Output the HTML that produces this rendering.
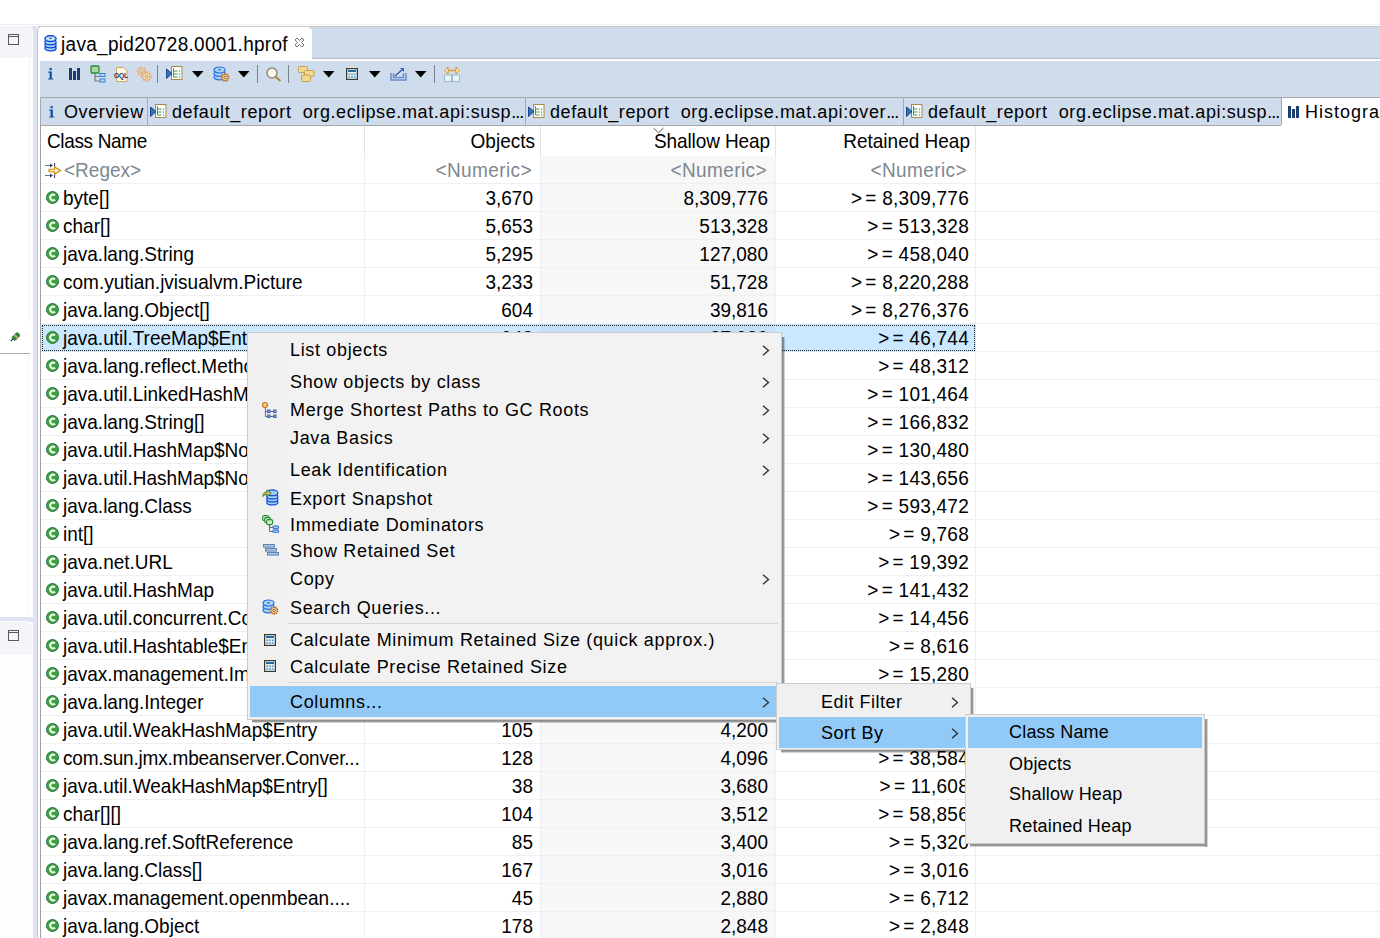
<!DOCTYPE html><html><head><meta charset="utf-8"><style>html,body{margin:0;padding:0;background:#fff;}body{width:1380px;height:938px;overflow:hidden;position:relative;font-family:"Liberation Sans",sans-serif;}</style></head><body>
<div style="position:absolute;left:0px;top:24px;width:1380px;height:1px;background:#f0f0f0"></div>
<div style="position:absolute;left:0px;top:26px;width:33px;height:33px;background:#dfe4f5"></div>
<div style="position:absolute;left:0px;top:26px;width:32px;height:32px;background:#f3f5fb;border-top-right-radius:6px;box-shadow:0 0 0 1px #fff"></div>
<svg style="position:absolute;left:8px;top:34px" width="11" height="11" viewBox="0 0 11 11"><rect x="0.5" y="0.5" width="10" height="10" fill="none" stroke="#595959" stroke-width="1"/><rect x="1" y="2" width="9" height="1" fill="#595959"/></svg>
<div style="position:absolute;left:0px;top:617px;width:37px;height:5px;background:#dfe4f5"></div>
<div style="position:absolute;left:0px;top:59px;width:32px;height:558px;background:#fff;border-bottom-right-radius:5px"></div>
<div style="position:absolute;left:29px;top:59px;width:1px;height:265px;background:#edf4fd"></div>
<svg style="position:absolute;left:10px;top:332px" width="10" height="10" viewBox="0 0 10 10"><path d="M0.8 9.2 L3.6 6.4" stroke="#0a2a90" stroke-width="1.2"/><g transform="rotate(-45 6 4.5)"><rect x="2" y="2.3" width="8" height="4.4" rx="1.2" fill="#3c9c3c" stroke="#1a6a2a" stroke-width="0.7"/><rect x="5.2" y="2.3" width="1.6" height="4.4" fill="#e0a878"/><rect x="3.2" y="2.3" width="0.8" height="4.4" fill="#1f6f2f"/><rect x="8" y="2.3" width="0.8" height="4.4" fill="#1f6f2f"/></g></svg>
<div style="position:absolute;left:0px;top:353px;width:30px;height:1px;background:#a8a8a8"></div>
<div style="position:absolute;left:28px;top:354px;width:1px;height:262px;background:#eef5fd"></div>
<div style="position:absolute;left:0px;top:622px;width:32px;height:33px;background:#f3f5fb;border-top-right-radius:6px;box-shadow:0 0 0 1px #fff"></div>
<svg style="position:absolute;left:8px;top:630px" width="11" height="11" viewBox="0 0 11 11"><rect x="0.5" y="0.5" width="10" height="10" fill="none" stroke="#595959" stroke-width="1"/><rect x="1" y="2" width="9" height="1" fill="#595959"/></svg>
<div style="position:absolute;left:0px;top:655px;width:32px;height:283px;background:#fdfdfe"></div>
<div style="position:absolute;left:33px;top:26px;width:4px;height:912px;background:#dfe4f5"></div>
<div style="position:absolute;left:37px;top:29px;width:1px;height:909px;background:#c8c8c8"></div>
<div style="position:absolute;left:38px;top:26px;width:1342px;height:33px;background:#cfdcec"></div>
<div style="position:absolute;left:38px;top:26px;width:1342px;height:1px;background:#c8c8c8"></div>
<div style="position:absolute;left:37px;top:26px;width:275px;height:33px;background:#fff;border-top:1px solid #c8c8c8;border-left:1px solid #c8c8c8;border-top-left-radius:5px;border-top-right-radius:5px;box-sizing:border-box"></div>
<svg style="position:absolute;left:44px;top:35px" width="13" height="17" viewBox="0 0 13 17"><g stroke="#1040d8" stroke-width="1.3" fill="#a6d6f2"><ellipse cx="6.5" cy="13.3" rx="5.6" ry="2.6"/><ellipse cx="6.5" cy="10.3" rx="5.6" ry="2.6"/><ellipse cx="6.5" cy="7.3" rx="5.6" ry="2.6"/><ellipse cx="6.5" cy="3.6" rx="5.6" ry="3"/></g><ellipse cx="6.5" cy="3.6" rx="3.5" ry="1.2" fill="#d8f0fb"/><rect x="5.6" y="2.8" width="1.8" height="1.2" fill="#0a2a60"/></svg>
<div style="position:absolute;left:61px;top:34px;height:21px;line-height:21px;font-size:19px;color:#000;white-space:nowrap;transform:scaleY(1.03);transform-origin:0 17px;letter-spacing:0.3px">java_pid20728.0001.hprof</div>
<svg style="position:absolute;left:294px;top:37px" width="11" height="11" viewBox="0 0 11 11"><path d="M1 3 L3 1 L5.5 3.5 L8 1 L10 3 L7.5 5.5 L10 8 L8 10 L5.5 7.5 L3 10 L1 8 L3.5 5.5 Z" fill="#fff" stroke="#707070" stroke-width="1"/></svg>
<div style="position:absolute;left:38px;top:59px;width:1342px;height:2px;background:#fff"></div>
<div style="position:absolute;left:312px;top:58px;width:1068px;height:1px;background:#b4bcc8"></div>
<div style="position:absolute;left:40px;top:61px;width:1340px;height:36px;background:#cfdcec"></div>
<svg style="position:absolute;left:48px;top:68px" width="6" height="12" viewBox="0 0 6 12"><rect x="1.6" y="0" width="2.2" height="2.2" fill="#0b4fa0"/><path d="M0.2 3.6 H3.8 V10.4 H5.2 V11.6 H0.2 V10.4 H1.6 V4.8 H0.2 Z" fill="#0b4fa0"/></svg>
<svg style="position:absolute;left:69px;top:68px" width="12" height="12" viewBox="0 0 12 12"><rect x="0" y="0" width="3" height="12" fill="#1b3e6e"/><rect x="4" y="3" width="3" height="9" fill="#1b3e6e"/><rect x="8" y="0" width="3" height="12" fill="#1b3e6e"/></svg>
<svg style="position:absolute;left:90px;top:65px" width="16" height="18" viewBox="0 0 16 18"><path d="M5 8 V16 H10 M5 11.5 H10" stroke="#7a7a7a" stroke-width="1.2" fill="none"/><rect x="1" y="1" width="8" height="7" rx="1" fill="#a8d8a0" stroke="#2a8a3a" stroke-width="1.3"/><rect x="10" y="8.5" width="5" height="3" fill="#a8dcf8" stroke="#3a80d0" stroke-width="1"/><rect x="10" y="14" width="5" height="3" fill="#a8dcf8" stroke="#3a80d0" stroke-width="1"/></svg>
<svg style="position:absolute;left:114px;top:67px" width="14" height="15" viewBox="0 0 14 15"><path d="M2.5 0.5 H9.5 L13 4 V14.5 H2.5 Z" fill="#fbf7ec" stroke="#c8a860" stroke-width="1"/><text x="0" y="10.5" font-family="Liberation Sans" font-size="6.5" font-weight="bold" fill="#1a2a6a">OQL</text></svg>
<svg style="position:absolute;left:136px;top:66px" width="17" height="17" viewBox="0 0 17 17"><circle cx="5.5" cy="5.5" r="3.8000000000000003" fill="none" stroke="#eba588" stroke-width="2.2" stroke-dasharray="1.5 1.3"/><circle cx="5.5" cy="5.5" r="3.2" fill="#f8e6a0" stroke="#e0a070" stroke-width="0.7"/><circle cx="5.5" cy="5.5" r="1.4" fill="#fff" stroke="#806a50" stroke-width="0.7"/><circle cx="10.5" cy="10.5" r="4.2" fill="none" stroke="#eba588" stroke-width="2.2" stroke-dasharray="1.5 1.3"/><circle cx="10.5" cy="10.5" r="3.6" fill="#f8e6a0" stroke="#e0a070" stroke-width="0.7"/><circle cx="10.5" cy="10.5" r="1.4" fill="#fff" stroke="#806a50" stroke-width="0.7"/></svg>
<div style="position:absolute;left:157px;top:65px;width:1px;height:18px;background:#7a8290"></div>
<svg style="position:absolute;left:166px;top:66px" width="17" height="14" viewBox="0 0 17 14"><rect x="5.5" y="0.5" width="10.5" height="13" fill="#fff" stroke="#a88a48" stroke-width="1"/><path d="M7.5 2 V11 M7.5 5 H11.5 M7.5 8 H11.5 M7.5 11 H11.5" stroke="#3a9a4a" stroke-width="1" fill="none"/><rect x="13" y="4.5" width="1.2" height="1.2" fill="#3a9a4a"/><rect x="13" y="7.5" width="1.2" height="1.2" fill="#3a9a4a"/><rect x="13" y="10.5" width="1.2" height="1.2" fill="#3a9a4a"/><path d="M0.5 3 L6 7.5 L0.5 12.5 Z" fill="#2a7ab0" stroke="#0a2a80" stroke-width="0.8"/></svg>
<svg style="position:absolute;left:192px;top:71px" width="12" height="7" viewBox="0 0 12 7"><path d="M0 0 H11.5 L5.75 6.6 Z" fill="#000"/></svg>
<svg style="position:absolute;left:213px;top:66px" width="17" height="16" viewBox="0 0 17 16"><g stroke="#2a70e0" stroke-width="1.2" fill="#a8d8f5"><ellipse cx="6.5" cy="11" rx="5.5" ry="2.8"/><ellipse cx="6.5" cy="7.5" rx="5.5" ry="2.8"/><ellipse cx="6.5" cy="4" rx="5.5" ry="3"/></g><rect x="5.5" y="3.2" width="2" height="1.2" fill="#0a3a80"/><circle cx="12" cy="11.5" r="3.7" fill="none" stroke="#c86a30" stroke-width="1.5" stroke-dasharray="1.2 1.1"/><circle cx="12" cy="11.5" r="3.1" fill="#f8d880" stroke="#c86a30" stroke-width="0.9"/><circle cx="12" cy="11.5" r="1.2" fill="#fff" stroke="#6a4a30" stroke-width="0.8"/></svg>
<svg style="position:absolute;left:238px;top:71px" width="12" height="7" viewBox="0 0 12 7"><path d="M0 0 H11.5 L5.75 6.6 Z" fill="#000"/></svg>
<div style="position:absolute;left:257px;top:65px;width:1px;height:18px;background:#7a8290"></div>
<svg style="position:absolute;left:266px;top:67px" width="16" height="15" viewBox="0 0 16 15"><circle cx="6" cy="6" r="5" fill="#fbf8e8" stroke="#8a8a80" stroke-width="1.5"/><path d="M9.5 9.5 L14.5 14" stroke="#b08a40" stroke-width="2.2"/></svg>
<div style="position:absolute;left:288px;top:65px;width:1px;height:18px;background:#7a8290"></div>
<svg style="position:absolute;left:298px;top:66px" width="17" height="16" viewBox="0 0 17 16"><g fill="#f5d990" stroke="#c8a050" stroke-width="1"><rect x="0.5" y="0.5" width="9" height="6" rx="1"/><rect x="6.5" y="4.5" width="9.5" height="6" rx="1"/><rect x="3.5" y="9" width="9" height="6.5" rx="1"/></g></svg>
<svg style="position:absolute;left:323px;top:71px" width="12" height="7" viewBox="0 0 12 7"><path d="M0 0 H11.5 L5.75 6.6 Z" fill="#000"/></svg>
<svg style="position:absolute;left:346px;top:68px" width="12" height="12" viewBox="0 0 12 12"><rect x="0.6" y="0.6" width="10.8" height="10.8" fill="#e8f0f0" stroke="#3a3a30" stroke-width="1.2"/><rect x="2" y="2" width="8" height="2" fill="#2a6aa0"/><g fill="#3a8ac0"><rect x="2.5" y="5.5" width="1.6" height="1.4"/><rect x="5.2" y="5.5" width="1.6" height="1.4"/><rect x="7.9" y="5.5" width="1.6" height="1.4"/><rect x="2.5" y="8.3" width="1.6" height="1.4"/><rect x="5.2" y="8.3" width="1.6" height="1.4"/><rect x="7.9" y="8.3" width="1.6" height="1.4"/></g></svg>
<svg style="position:absolute;left:369px;top:71px" width="12" height="7" viewBox="0 0 12 7"><path d="M0 0 H11.5 L5.75 6.6 Z" fill="#000"/></svg>
<svg style="position:absolute;left:390px;top:67px" width="17" height="14" viewBox="0 0 17 14"><path d="M1 6 V13 H16 V6 M3.5 6 V10.5 H13.5 V6" fill="none" stroke="#6a8ac8" stroke-width="1.5"/><path d="M5 9 L13 2" stroke="#3a50a0" stroke-width="1.3"/><path d="M10 1 H14 V5 Z" fill="#2a6ad0"/></svg>
<svg style="position:absolute;left:415px;top:71px" width="12" height="7" viewBox="0 0 12 7"><path d="M0 0 H11.5 L5.75 6.6 Z" fill="#000"/></svg>
<div style="position:absolute;left:434px;top:65px;width:1px;height:18px;background:#7a8290"></div>
<svg style="position:absolute;left:444px;top:66px" width="16" height="16" viewBox="0 0 16 16"><path d="M3 4.5 H13" stroke="#e0a030" stroke-width="1.5"/><path d="M0.5 4.5 L4 1 V8 Z M15.5 4.5 L12 1 V8 Z" fill="#fff6d0" stroke="#d89020" stroke-width="1"/><rect x="0.5" y="9" width="7" height="6.5" fill="#e8f4fc" stroke="#a0b8c8" stroke-width="1"/><rect x="8.5" y="9" width="7" height="6.5" fill="#e8f4fc" stroke="#a0b8c8" stroke-width="1"/></svg>
<div style="position:absolute;left:40px;top:97px;width:1340px;height:29px;background:#cfdcec"></div>
<div style="position:absolute;left:40px;top:97px;width:1340px;height:1px;background:#a8a8a8"></div>
<div style="position:absolute;left:40px;top:125px;width:1242px;height:1px;background:#a8a8a8"></div>
<div style="position:absolute;left:40px;top:97px;width:1px;height:29px;background:#a8a8a8"></div>
<div style="position:absolute;left:147px;top:98px;width:1px;height:27px;background:#a8a8a8"></div>
<div style="position:absolute;left:525px;top:98px;width:1px;height:27px;background:#a8a8a8"></div>
<div style="position:absolute;left:903px;top:98px;width:1px;height:27px;background:#a8a8a8"></div>
<div style="position:absolute;left:1281px;top:97px;width:99px;height:29px;background:#fff"></div>
<div style="position:absolute;left:1281px;top:97px;width:1px;height:28px;background:#a8a8a8"></div>
<div style="position:absolute;left:1281px;top:97px;width:99px;height:1px;background:#a8a8a8"></div>
<svg style="position:absolute;left:49px;top:106px" width="6" height="12" viewBox="0 0 6 12"><rect x="1.6" y="0" width="2.2" height="2.2" fill="#0b4fa0"/><path d="M0.2 3.6 H3.8 V10.4 H5.2 V11.6 H0.2 V10.4 H1.6 V4.8 H0.2 Z" fill="#0b4fa0"/></svg>
<div style="position:absolute;left:64px;top:102px;height:20px;line-height:20px;font-size:18px;color:#000;white-space:nowrap;letter-spacing:0.6px">Overview</div>
<svg style="position:absolute;left:150px;top:104px" width="17" height="14" viewBox="0 0 17 14"><rect x="5.5" y="0.5" width="10.5" height="13" fill="#fff" stroke="#a88a48" stroke-width="1"/><path d="M7.5 2 V11 M7.5 5 H11.5 M7.5 8 H11.5 M7.5 11 H11.5" stroke="#3a9a4a" stroke-width="1" fill="none"/><rect x="13" y="4.5" width="1.2" height="1.2" fill="#3a9a4a"/><rect x="13" y="7.5" width="1.2" height="1.2" fill="#3a9a4a"/><rect x="13" y="10.5" width="1.2" height="1.2" fill="#3a9a4a"/><path d="M0.5 3 L6 7.5 L0.5 12.5 Z" fill="#2a7ab0" stroke="#0a2a80" stroke-width="0.8"/></svg>
<div style="position:absolute;left:172px;top:102px;height:20px;line-height:20px;font-size:18px;color:#000;white-space:nowrap;letter-spacing:0.6px">default_report&nbsp; org.eclipse.mat.api:susp<span style="letter-spacing:-1px">...</span></div>
<svg style="position:absolute;left:528px;top:104px" width="17" height="14" viewBox="0 0 17 14"><rect x="5.5" y="0.5" width="10.5" height="13" fill="#fff" stroke="#a88a48" stroke-width="1"/><path d="M7.5 2 V11 M7.5 5 H11.5 M7.5 8 H11.5 M7.5 11 H11.5" stroke="#3a9a4a" stroke-width="1" fill="none"/><rect x="13" y="4.5" width="1.2" height="1.2" fill="#3a9a4a"/><rect x="13" y="7.5" width="1.2" height="1.2" fill="#3a9a4a"/><rect x="13" y="10.5" width="1.2" height="1.2" fill="#3a9a4a"/><path d="M0.5 3 L6 7.5 L0.5 12.5 Z" fill="#2a7ab0" stroke="#0a2a80" stroke-width="0.8"/></svg>
<div style="position:absolute;left:550px;top:102px;height:20px;line-height:20px;font-size:18px;color:#000;white-space:nowrap;letter-spacing:0.6px">default_report&nbsp; org.eclipse.mat.api:over<span style="letter-spacing:-1px">...</span></div>
<svg style="position:absolute;left:906px;top:104px" width="17" height="14" viewBox="0 0 17 14"><rect x="5.5" y="0.5" width="10.5" height="13" fill="#fff" stroke="#a88a48" stroke-width="1"/><path d="M7.5 2 V11 M7.5 5 H11.5 M7.5 8 H11.5 M7.5 11 H11.5" stroke="#3a9a4a" stroke-width="1" fill="none"/><rect x="13" y="4.5" width="1.2" height="1.2" fill="#3a9a4a"/><rect x="13" y="7.5" width="1.2" height="1.2" fill="#3a9a4a"/><rect x="13" y="10.5" width="1.2" height="1.2" fill="#3a9a4a"/><path d="M0.5 3 L6 7.5 L0.5 12.5 Z" fill="#2a7ab0" stroke="#0a2a80" stroke-width="0.8"/></svg>
<div style="position:absolute;left:928px;top:102px;height:20px;line-height:20px;font-size:18px;color:#000;white-space:nowrap;letter-spacing:0.6px">default_report&nbsp; org.eclipse.mat.api:susp<span style="letter-spacing:-1px">...</span></div>
<svg style="position:absolute;left:1288px;top:106px" width="11" height="12" viewBox="0 0 11 12"><rect x="0" y="0" width="3" height="12" fill="#1b3e6e"/><rect x="4" y="3" width="3" height="9" fill="#1b3e6e"/><rect x="8" y="0" width="3" height="12" fill="#1b3e6e"/></svg>
<div style="position:absolute;left:1305px;top:102px;height:20px;line-height:20px;font-size:18px;color:#000;white-space:nowrap;letter-spacing:1px">Histogram</div>
<div style="position:absolute;left:40px;top:126px;width:1px;height:812px;background:#a0a0a0"></div>
<div style="position:absolute;left:47px;top:131px;height:21px;line-height:21px;font-size:19px;color:#000;white-space:nowrap;transform:scaleY(1.07);transform-origin:0 17px;letter-spacing:-0.35px">Class Name</div>
<div style="position:absolute;right:845px;top:131px;height:21px;line-height:21px;font-size:19px;color:#000;white-space:nowrap;text-align:right;transform:scaleY(1.07);transform-origin:0 17px;">Objects</div>
<div style="position:absolute;right:610px;top:131px;height:21px;line-height:21px;font-size:19px;color:#000;white-space:nowrap;text-align:right;transform:scaleY(1.07);transform-origin:0 17px;letter-spacing:-0.1px">Shallow Heap</div>
<div style="position:absolute;right:410px;top:131px;height:21px;line-height:21px;font-size:19px;color:#000;white-space:nowrap;text-align:right;transform:scaleY(1.07);transform-origin:0 17px;">Retained Heap</div>
<div style="position:absolute;left:364px;top:126px;width:1px;height:30px;background:#e5e5e5"></div>
<div style="position:absolute;left:540px;top:126px;width:1px;height:30px;background:#e5e5e5"></div>
<div style="position:absolute;left:775px;top:126px;width:1px;height:30px;background:#e5e5e5"></div>
<div style="position:absolute;left:975px;top:126px;width:1px;height:30px;background:#e5e5e5"></div>
<svg style="position:absolute;left:653px;top:127px" width="12" height="7" viewBox="0 0 12 7"><path d="M0.5 1 L5.5 5.8 L10.5 1" fill="none" stroke="#555" stroke-width="1"/></svg>
<div style="position:absolute;left:541px;top:156px;width:234px;height:782px;background:#f7f7f7"></div>
<svg style="position:absolute;left:44px;top:162px" width="18" height="17" viewBox="0 0 18 17"><path d="M1 3.5 H8 M1 13.5 H8" stroke="#5a7c9c" stroke-width="1.1"/><path d="M6 1.6 L9 3.5 L6 5.4 Z M6 11.6 L9 13.5 L6 15.4 Z" fill="#2c3c64"/><rect x="10" y="1" width="1.1" height="5" fill="#3a4a7a"/><rect x="10" y="11" width="1.1" height="5" fill="#3a4a7a"/><path d="M5 7.2 H10.6 V5 L16.6 8.5 L10.6 12 V9.8 H5 Z" fill="#fff2c0" stroke="#cf8610" stroke-width="1.1"/></svg>
<div style="position:absolute;left:64px;top:160px;height:21px;line-height:21px;font-size:19px;color:#7d8792;white-space:nowrap;transform:scaleY(1.07);transform-origin:0 17px;">&lt;Regex&gt;</div>
<div style="position:absolute;right:848px;top:160px;height:21px;line-height:21px;font-size:19px;color:#7d8792;white-space:nowrap;text-align:right;transform:scaleY(1.07);transform-origin:0 17px;letter-spacing:0.4px">&lt;Numeric&gt;</div>
<div style="position:absolute;right:613px;top:160px;height:21px;line-height:21px;font-size:19px;color:#7d8792;white-space:nowrap;text-align:right;transform:scaleY(1.07);transform-origin:0 17px;letter-spacing:0.4px">&lt;Numeric&gt;</div>
<div style="position:absolute;right:413px;top:160px;height:21px;line-height:21px;font-size:19px;color:#7d8792;white-space:nowrap;text-align:right;transform:scaleY(1.07);transform-origin:0 17px;letter-spacing:0.4px">&lt;Numeric&gt;</div>
<div style="position:absolute;left:41px;top:183px;width:1339px;height:1px;background:#f0f0f0"></div>
<div style="position:absolute;left:364px;top:156px;width:1px;height:782px;background:#eaf1fb"></div>
<div style="position:absolute;left:540px;top:156px;width:1px;height:782px;background:#eaf1fb"></div>
<div style="position:absolute;left:775px;top:156px;width:1px;height:782px;background:#eaf1fb"></div>
<div style="position:absolute;left:975px;top:156px;width:1px;height:782px;background:#eaf1fb"></div>
<div style="position:absolute;left:41px;top:211px;width:1339px;height:1px;background:#f0f0f0"></div>
<div style="position:absolute;left:41px;top:239px;width:1339px;height:1px;background:#f0f0f0"></div>
<div style="position:absolute;left:41px;top:267px;width:1339px;height:1px;background:#f0f0f0"></div>
<div style="position:absolute;left:41px;top:295px;width:1339px;height:1px;background:#f0f0f0"></div>
<div style="position:absolute;left:41px;top:323px;width:1339px;height:1px;background:#f0f0f0"></div>
<div style="position:absolute;left:41px;top:351px;width:1339px;height:1px;background:#f0f0f0"></div>
<div style="position:absolute;left:41px;top:379px;width:1339px;height:1px;background:#f0f0f0"></div>
<div style="position:absolute;left:41px;top:407px;width:1339px;height:1px;background:#f0f0f0"></div>
<div style="position:absolute;left:41px;top:435px;width:1339px;height:1px;background:#f0f0f0"></div>
<div style="position:absolute;left:41px;top:463px;width:1339px;height:1px;background:#f0f0f0"></div>
<div style="position:absolute;left:41px;top:491px;width:1339px;height:1px;background:#f0f0f0"></div>
<div style="position:absolute;left:41px;top:519px;width:1339px;height:1px;background:#f0f0f0"></div>
<div style="position:absolute;left:41px;top:547px;width:1339px;height:1px;background:#f0f0f0"></div>
<div style="position:absolute;left:41px;top:575px;width:1339px;height:1px;background:#f0f0f0"></div>
<div style="position:absolute;left:41px;top:603px;width:1339px;height:1px;background:#f0f0f0"></div>
<div style="position:absolute;left:41px;top:631px;width:1339px;height:1px;background:#f0f0f0"></div>
<div style="position:absolute;left:41px;top:659px;width:1339px;height:1px;background:#f0f0f0"></div>
<div style="position:absolute;left:41px;top:687px;width:1339px;height:1px;background:#f0f0f0"></div>
<div style="position:absolute;left:41px;top:715px;width:1339px;height:1px;background:#f0f0f0"></div>
<div style="position:absolute;left:41px;top:743px;width:1339px;height:1px;background:#f0f0f0"></div>
<div style="position:absolute;left:41px;top:771px;width:1339px;height:1px;background:#f0f0f0"></div>
<div style="position:absolute;left:41px;top:799px;width:1339px;height:1px;background:#f0f0f0"></div>
<div style="position:absolute;left:41px;top:827px;width:1339px;height:1px;background:#f0f0f0"></div>
<div style="position:absolute;left:41px;top:855px;width:1339px;height:1px;background:#f0f0f0"></div>
<div style="position:absolute;left:41px;top:883px;width:1339px;height:1px;background:#f0f0f0"></div>
<div style="position:absolute;left:41px;top:911px;width:1339px;height:1px;background:#f0f0f0"></div>
<div style="position:absolute;left:41px;top:939px;width:1339px;height:1px;background:#f0f0f0"></div>
<div style="position:absolute;left:41px;top:324px;width:935px;height:28px;background:#cce8ff"></div>
<div style="position:absolute;left:541px;top:324px;width:234px;height:28px;background:#c4e0f8"></div>
<div style="position:absolute;left:42px;top:325px;width:931px;height:24px;border:1px dotted #222;"></div>
<svg style="position:absolute;left:46px;top:191px" width="14" height="14" viewBox="0 0 14 14"><circle cx="6.5" cy="6.5" r="6" fill="#3ca23c" stroke="#237a3a" stroke-width="1"/><path d="M9 4.3 A2.9 2.9 0 1 0 9 8.7" fill="none" stroke="#fff" stroke-width="1.9"/></svg>
<div style="position:absolute;left:63px;top:188px;height:21px;line-height:21px;font-size:19px;color:#000;white-space:nowrap;transform:scaleY(1.07);transform-origin:0 17px;">byte[]</div>
<div style="position:absolute;right:847px;top:188px;height:21px;line-height:21px;font-size:19px;color:#000;white-space:nowrap;text-align:right;transform:scaleY(1.07);transform-origin:0 17px;">3,670</div>
<div style="position:absolute;right:612px;top:188px;height:21px;line-height:21px;font-size:19px;color:#000;white-space:nowrap;text-align:right;transform:scaleY(1.07);transform-origin:0 17px;">8,309,776</div>
<div style="position:absolute;right:411px;top:188px;height:21px;line-height:21px;font-size:19px;color:#000;white-space:nowrap;text-align:right;transform:scaleY(1.07);transform-origin:0 17px;letter-spacing:0.25px">&gt;<span style="margin-left:3px">=</span>&nbsp;8,309,776</div>
<svg style="position:absolute;left:46px;top:219px" width="14" height="14" viewBox="0 0 14 14"><circle cx="6.5" cy="6.5" r="6" fill="#3ca23c" stroke="#237a3a" stroke-width="1"/><path d="M9 4.3 A2.9 2.9 0 1 0 9 8.7" fill="none" stroke="#fff" stroke-width="1.9"/></svg>
<div style="position:absolute;left:63px;top:216px;height:21px;line-height:21px;font-size:19px;color:#000;white-space:nowrap;transform:scaleY(1.07);transform-origin:0 17px;">char[]</div>
<div style="position:absolute;right:847px;top:216px;height:21px;line-height:21px;font-size:19px;color:#000;white-space:nowrap;text-align:right;transform:scaleY(1.07);transform-origin:0 17px;">5,653</div>
<div style="position:absolute;right:612px;top:216px;height:21px;line-height:21px;font-size:19px;color:#000;white-space:nowrap;text-align:right;transform:scaleY(1.07);transform-origin:0 17px;">513,328</div>
<div style="position:absolute;right:411px;top:216px;height:21px;line-height:21px;font-size:19px;color:#000;white-space:nowrap;text-align:right;transform:scaleY(1.07);transform-origin:0 17px;letter-spacing:0.25px">&gt;<span style="margin-left:3px">=</span>&nbsp;513,328</div>
<svg style="position:absolute;left:46px;top:247px" width="14" height="14" viewBox="0 0 14 14"><circle cx="6.5" cy="6.5" r="6" fill="#3ca23c" stroke="#237a3a" stroke-width="1"/><path d="M9 4.3 A2.9 2.9 0 1 0 9 8.7" fill="none" stroke="#fff" stroke-width="1.9"/></svg>
<div style="position:absolute;left:63px;top:244px;height:21px;line-height:21px;font-size:19px;color:#000;white-space:nowrap;transform:scaleY(1.07);transform-origin:0 17px;">java.lang.String</div>
<div style="position:absolute;right:847px;top:244px;height:21px;line-height:21px;font-size:19px;color:#000;white-space:nowrap;text-align:right;transform:scaleY(1.07);transform-origin:0 17px;">5,295</div>
<div style="position:absolute;right:612px;top:244px;height:21px;line-height:21px;font-size:19px;color:#000;white-space:nowrap;text-align:right;transform:scaleY(1.07);transform-origin:0 17px;">127,080</div>
<div style="position:absolute;right:411px;top:244px;height:21px;line-height:21px;font-size:19px;color:#000;white-space:nowrap;text-align:right;transform:scaleY(1.07);transform-origin:0 17px;letter-spacing:0.25px">&gt;<span style="margin-left:3px">=</span>&nbsp;458,040</div>
<svg style="position:absolute;left:46px;top:275px" width="14" height="14" viewBox="0 0 14 14"><circle cx="6.5" cy="6.5" r="6" fill="#3ca23c" stroke="#237a3a" stroke-width="1"/><path d="M9 4.3 A2.9 2.9 0 1 0 9 8.7" fill="none" stroke="#fff" stroke-width="1.9"/></svg>
<div style="position:absolute;left:63px;top:272px;height:21px;line-height:21px;font-size:19px;color:#000;white-space:nowrap;transform:scaleY(1.07);transform-origin:0 17px;">com.yutian.jvisualvm.Picture</div>
<div style="position:absolute;right:847px;top:272px;height:21px;line-height:21px;font-size:19px;color:#000;white-space:nowrap;text-align:right;transform:scaleY(1.07);transform-origin:0 17px;">3,233</div>
<div style="position:absolute;right:612px;top:272px;height:21px;line-height:21px;font-size:19px;color:#000;white-space:nowrap;text-align:right;transform:scaleY(1.07);transform-origin:0 17px;">51,728</div>
<div style="position:absolute;right:411px;top:272px;height:21px;line-height:21px;font-size:19px;color:#000;white-space:nowrap;text-align:right;transform:scaleY(1.07);transform-origin:0 17px;letter-spacing:0.25px">&gt;<span style="margin-left:3px">=</span>&nbsp;8,220,288</div>
<svg style="position:absolute;left:46px;top:303px" width="14" height="14" viewBox="0 0 14 14"><circle cx="6.5" cy="6.5" r="6" fill="#3ca23c" stroke="#237a3a" stroke-width="1"/><path d="M9 4.3 A2.9 2.9 0 1 0 9 8.7" fill="none" stroke="#fff" stroke-width="1.9"/></svg>
<div style="position:absolute;left:63px;top:300px;height:21px;line-height:21px;font-size:19px;color:#000;white-space:nowrap;transform:scaleY(1.07);transform-origin:0 17px;">java.lang.Object[]</div>
<div style="position:absolute;right:847px;top:300px;height:21px;line-height:21px;font-size:19px;color:#000;white-space:nowrap;text-align:right;transform:scaleY(1.07);transform-origin:0 17px;">604</div>
<div style="position:absolute;right:612px;top:300px;height:21px;line-height:21px;font-size:19px;color:#000;white-space:nowrap;text-align:right;transform:scaleY(1.07);transform-origin:0 17px;">39,816</div>
<div style="position:absolute;right:411px;top:300px;height:21px;line-height:21px;font-size:19px;color:#000;white-space:nowrap;text-align:right;transform:scaleY(1.07);transform-origin:0 17px;letter-spacing:0.25px">&gt;<span style="margin-left:3px">=</span>&nbsp;8,276,376</div>
<svg style="position:absolute;left:46px;top:331px" width="14" height="14" viewBox="0 0 14 14"><circle cx="6.5" cy="6.5" r="6" fill="#3ca23c" stroke="#237a3a" stroke-width="1"/><path d="M9 4.3 A2.9 2.9 0 1 0 9 8.7" fill="none" stroke="#fff" stroke-width="1.9"/></svg>
<div style="position:absolute;left:63px;top:328px;height:21px;line-height:21px;font-size:19px;color:#000;white-space:nowrap;transform:scaleY(1.07);transform-origin:0 17px;">java.util.TreeMap$Entry</div>
<div style="position:absolute;right:847px;top:328px;height:21px;line-height:21px;font-size:19px;color:#000;white-space:nowrap;text-align:right;transform:scaleY(1.07);transform-origin:0 17px;">948</div>
<div style="position:absolute;right:612px;top:328px;height:21px;line-height:21px;font-size:19px;color:#000;white-space:nowrap;text-align:right;transform:scaleY(1.07);transform-origin:0 17px;">37,920</div>
<div style="position:absolute;right:411px;top:328px;height:21px;line-height:21px;font-size:19px;color:#000;white-space:nowrap;text-align:right;transform:scaleY(1.07);transform-origin:0 17px;letter-spacing:0.25px">&gt;<span style="margin-left:3px">=</span>&nbsp;46,744</div>
<svg style="position:absolute;left:46px;top:359px" width="14" height="14" viewBox="0 0 14 14"><circle cx="6.5" cy="6.5" r="6" fill="#3ca23c" stroke="#237a3a" stroke-width="1"/><path d="M9 4.3 A2.9 2.9 0 1 0 9 8.7" fill="none" stroke="#fff" stroke-width="1.9"/></svg>
<div style="position:absolute;left:63px;top:356px;height:21px;line-height:21px;font-size:19px;color:#000;white-space:nowrap;transform:scaleY(1.07);transform-origin:0 17px;">java.lang.reflect.Method</div>
<div style="position:absolute;right:411px;top:356px;height:21px;line-height:21px;font-size:19px;color:#000;white-space:nowrap;text-align:right;transform:scaleY(1.07);transform-origin:0 17px;letter-spacing:0.25px">&gt;<span style="margin-left:3px">=</span>&nbsp;48,312</div>
<svg style="position:absolute;left:46px;top:387px" width="14" height="14" viewBox="0 0 14 14"><circle cx="6.5" cy="6.5" r="6" fill="#3ca23c" stroke="#237a3a" stroke-width="1"/><path d="M9 4.3 A2.9 2.9 0 1 0 9 8.7" fill="none" stroke="#fff" stroke-width="1.9"/></svg>
<div style="position:absolute;left:63px;top:384px;height:21px;line-height:21px;font-size:19px;color:#000;white-space:nowrap;transform:scaleY(1.07);transform-origin:0 17px;">java.util.LinkedHashMap$Entry</div>
<div style="position:absolute;right:411px;top:384px;height:21px;line-height:21px;font-size:19px;color:#000;white-space:nowrap;text-align:right;transform:scaleY(1.07);transform-origin:0 17px;letter-spacing:0.25px">&gt;<span style="margin-left:3px">=</span>&nbsp;101,464</div>
<svg style="position:absolute;left:46px;top:415px" width="14" height="14" viewBox="0 0 14 14"><circle cx="6.5" cy="6.5" r="6" fill="#3ca23c" stroke="#237a3a" stroke-width="1"/><path d="M9 4.3 A2.9 2.9 0 1 0 9 8.7" fill="none" stroke="#fff" stroke-width="1.9"/></svg>
<div style="position:absolute;left:63px;top:412px;height:21px;line-height:21px;font-size:19px;color:#000;white-space:nowrap;transform:scaleY(1.07);transform-origin:0 17px;">java.lang.String[]</div>
<div style="position:absolute;right:411px;top:412px;height:21px;line-height:21px;font-size:19px;color:#000;white-space:nowrap;text-align:right;transform:scaleY(1.07);transform-origin:0 17px;letter-spacing:0.25px">&gt;<span style="margin-left:3px">=</span>&nbsp;166,832</div>
<svg style="position:absolute;left:46px;top:443px" width="14" height="14" viewBox="0 0 14 14"><circle cx="6.5" cy="6.5" r="6" fill="#3ca23c" stroke="#237a3a" stroke-width="1"/><path d="M9 4.3 A2.9 2.9 0 1 0 9 8.7" fill="none" stroke="#fff" stroke-width="1.9"/></svg>
<div style="position:absolute;left:63px;top:440px;height:21px;line-height:21px;font-size:19px;color:#000;white-space:nowrap;transform:scaleY(1.07);transform-origin:0 17px;">java.util.HashMap$Node</div>
<div style="position:absolute;right:411px;top:440px;height:21px;line-height:21px;font-size:19px;color:#000;white-space:nowrap;text-align:right;transform:scaleY(1.07);transform-origin:0 17px;letter-spacing:0.25px">&gt;<span style="margin-left:3px">=</span>&nbsp;130,480</div>
<svg style="position:absolute;left:46px;top:471px" width="14" height="14" viewBox="0 0 14 14"><circle cx="6.5" cy="6.5" r="6" fill="#3ca23c" stroke="#237a3a" stroke-width="1"/><path d="M9 4.3 A2.9 2.9 0 1 0 9 8.7" fill="none" stroke="#fff" stroke-width="1.9"/></svg>
<div style="position:absolute;left:63px;top:468px;height:21px;line-height:21px;font-size:19px;color:#000;white-space:nowrap;transform:scaleY(1.07);transform-origin:0 17px;">java.util.HashMap$Node[]</div>
<div style="position:absolute;right:411px;top:468px;height:21px;line-height:21px;font-size:19px;color:#000;white-space:nowrap;text-align:right;transform:scaleY(1.07);transform-origin:0 17px;letter-spacing:0.25px">&gt;<span style="margin-left:3px">=</span>&nbsp;143,656</div>
<svg style="position:absolute;left:46px;top:499px" width="14" height="14" viewBox="0 0 14 14"><circle cx="6.5" cy="6.5" r="6" fill="#3ca23c" stroke="#237a3a" stroke-width="1"/><path d="M9 4.3 A2.9 2.9 0 1 0 9 8.7" fill="none" stroke="#fff" stroke-width="1.9"/></svg>
<div style="position:absolute;left:63px;top:496px;height:21px;line-height:21px;font-size:19px;color:#000;white-space:nowrap;transform:scaleY(1.07);transform-origin:0 17px;">java.lang.Class</div>
<div style="position:absolute;right:411px;top:496px;height:21px;line-height:21px;font-size:19px;color:#000;white-space:nowrap;text-align:right;transform:scaleY(1.07);transform-origin:0 17px;letter-spacing:0.25px">&gt;<span style="margin-left:3px">=</span>&nbsp;593,472</div>
<svg style="position:absolute;left:46px;top:527px" width="14" height="14" viewBox="0 0 14 14"><circle cx="6.5" cy="6.5" r="6" fill="#3ca23c" stroke="#237a3a" stroke-width="1"/><path d="M9 4.3 A2.9 2.9 0 1 0 9 8.7" fill="none" stroke="#fff" stroke-width="1.9"/></svg>
<div style="position:absolute;left:63px;top:524px;height:21px;line-height:21px;font-size:19px;color:#000;white-space:nowrap;transform:scaleY(1.07);transform-origin:0 17px;">int[]</div>
<div style="position:absolute;right:411px;top:524px;height:21px;line-height:21px;font-size:19px;color:#000;white-space:nowrap;text-align:right;transform:scaleY(1.07);transform-origin:0 17px;letter-spacing:0.25px">&gt;<span style="margin-left:3px">=</span>&nbsp;9,768</div>
<svg style="position:absolute;left:46px;top:555px" width="14" height="14" viewBox="0 0 14 14"><circle cx="6.5" cy="6.5" r="6" fill="#3ca23c" stroke="#237a3a" stroke-width="1"/><path d="M9 4.3 A2.9 2.9 0 1 0 9 8.7" fill="none" stroke="#fff" stroke-width="1.9"/></svg>
<div style="position:absolute;left:63px;top:552px;height:21px;line-height:21px;font-size:19px;color:#000;white-space:nowrap;transform:scaleY(1.07);transform-origin:0 17px;">java.net.URL</div>
<div style="position:absolute;right:411px;top:552px;height:21px;line-height:21px;font-size:19px;color:#000;white-space:nowrap;text-align:right;transform:scaleY(1.07);transform-origin:0 17px;letter-spacing:0.25px">&gt;<span style="margin-left:3px">=</span>&nbsp;19,392</div>
<svg style="position:absolute;left:46px;top:583px" width="14" height="14" viewBox="0 0 14 14"><circle cx="6.5" cy="6.5" r="6" fill="#3ca23c" stroke="#237a3a" stroke-width="1"/><path d="M9 4.3 A2.9 2.9 0 1 0 9 8.7" fill="none" stroke="#fff" stroke-width="1.9"/></svg>
<div style="position:absolute;left:63px;top:580px;height:21px;line-height:21px;font-size:19px;color:#000;white-space:nowrap;transform:scaleY(1.07);transform-origin:0 17px;">java.util.HashMap</div>
<div style="position:absolute;right:411px;top:580px;height:21px;line-height:21px;font-size:19px;color:#000;white-space:nowrap;text-align:right;transform:scaleY(1.07);transform-origin:0 17px;letter-spacing:0.25px">&gt;<span style="margin-left:3px">=</span>&nbsp;141,432</div>
<svg style="position:absolute;left:46px;top:611px" width="14" height="14" viewBox="0 0 14 14"><circle cx="6.5" cy="6.5" r="6" fill="#3ca23c" stroke="#237a3a" stroke-width="1"/><path d="M9 4.3 A2.9 2.9 0 1 0 9 8.7" fill="none" stroke="#fff" stroke-width="1.9"/></svg>
<div style="position:absolute;left:63px;top:608px;height:21px;line-height:21px;font-size:19px;color:#000;white-space:nowrap;transform:scaleY(1.07);transform-origin:0 17px;">java.util.concurrent.Co...</div>
<div style="position:absolute;right:411px;top:608px;height:21px;line-height:21px;font-size:19px;color:#000;white-space:nowrap;text-align:right;transform:scaleY(1.07);transform-origin:0 17px;letter-spacing:0.25px">&gt;<span style="margin-left:3px">=</span>&nbsp;14,456</div>
<svg style="position:absolute;left:46px;top:639px" width="14" height="14" viewBox="0 0 14 14"><circle cx="6.5" cy="6.5" r="6" fill="#3ca23c" stroke="#237a3a" stroke-width="1"/><path d="M9 4.3 A2.9 2.9 0 1 0 9 8.7" fill="none" stroke="#fff" stroke-width="1.9"/></svg>
<div style="position:absolute;left:63px;top:636px;height:21px;line-height:21px;font-size:19px;color:#000;white-space:nowrap;transform:scaleY(1.07);transform-origin:0 17px;">java.util.Hashtable$Entry</div>
<div style="position:absolute;right:411px;top:636px;height:21px;line-height:21px;font-size:19px;color:#000;white-space:nowrap;text-align:right;transform:scaleY(1.07);transform-origin:0 17px;letter-spacing:0.25px">&gt;<span style="margin-left:3px">=</span>&nbsp;8,616</div>
<svg style="position:absolute;left:46px;top:667px" width="14" height="14" viewBox="0 0 14 14"><circle cx="6.5" cy="6.5" r="6" fill="#3ca23c" stroke="#237a3a" stroke-width="1"/><path d="M9 4.3 A2.9 2.9 0 1 0 9 8.7" fill="none" stroke="#fff" stroke-width="1.9"/></svg>
<div style="position:absolute;left:63px;top:664px;height:21px;line-height:21px;font-size:19px;color:#000;white-space:nowrap;transform:scaleY(1.07);transform-origin:0 17px;">javax.management.Im...</div>
<div style="position:absolute;right:411px;top:664px;height:21px;line-height:21px;font-size:19px;color:#000;white-space:nowrap;text-align:right;transform:scaleY(1.07);transform-origin:0 17px;letter-spacing:0.25px">&gt;<span style="margin-left:3px">=</span>&nbsp;15,280</div>
<svg style="position:absolute;left:46px;top:695px" width="14" height="14" viewBox="0 0 14 14"><circle cx="6.5" cy="6.5" r="6" fill="#3ca23c" stroke="#237a3a" stroke-width="1"/><path d="M9 4.3 A2.9 2.9 0 1 0 9 8.7" fill="none" stroke="#fff" stroke-width="1.9"/></svg>
<div style="position:absolute;left:63px;top:692px;height:21px;line-height:21px;font-size:19px;color:#000;white-space:nowrap;transform:scaleY(1.07);transform-origin:0 17px;">java.lang.Integer</div>
<div style="position:absolute;right:411px;top:692px;height:21px;line-height:21px;font-size:19px;color:#000;white-space:nowrap;text-align:right;transform:scaleY(1.07);transform-origin:0 17px;letter-spacing:0.25px">&gt;<span style="margin-left:3px">=</span>&nbsp;36,048</div>
<svg style="position:absolute;left:46px;top:723px" width="14" height="14" viewBox="0 0 14 14"><circle cx="6.5" cy="6.5" r="6" fill="#3ca23c" stroke="#237a3a" stroke-width="1"/><path d="M9 4.3 A2.9 2.9 0 1 0 9 8.7" fill="none" stroke="#fff" stroke-width="1.9"/></svg>
<div style="position:absolute;left:63px;top:720px;height:21px;line-height:21px;font-size:19px;color:#000;white-space:nowrap;transform:scaleY(1.07);transform-origin:0 17px;">java.util.WeakHashMap$Entry</div>
<div style="position:absolute;right:847px;top:720px;height:21px;line-height:21px;font-size:19px;color:#000;white-space:nowrap;text-align:right;transform:scaleY(1.07);transform-origin:0 17px;">105</div>
<div style="position:absolute;right:612px;top:720px;height:21px;line-height:21px;font-size:19px;color:#000;white-space:nowrap;text-align:right;transform:scaleY(1.07);transform-origin:0 17px;">4,200</div>
<div style="position:absolute;right:411px;top:720px;height:21px;line-height:21px;font-size:19px;color:#000;white-space:nowrap;text-align:right;transform:scaleY(1.07);transform-origin:0 17px;letter-spacing:0.25px">&gt;<span style="margin-left:3px">=</span>&nbsp;8,808</div>
<svg style="position:absolute;left:46px;top:751px" width="14" height="14" viewBox="0 0 14 14"><circle cx="6.5" cy="6.5" r="6" fill="#3ca23c" stroke="#237a3a" stroke-width="1"/><path d="M9 4.3 A2.9 2.9 0 1 0 9 8.7" fill="none" stroke="#fff" stroke-width="1.9"/></svg>
<div style="position:absolute;left:63px;top:748px;height:21px;line-height:21px;font-size:19px;color:#000;white-space:nowrap;transform:scaleY(1.07);transform-origin:0 17px;letter-spacing:-0.2px">com.sun.jmx.mbeanserver.Conver...</div>
<div style="position:absolute;right:847px;top:748px;height:21px;line-height:21px;font-size:19px;color:#000;white-space:nowrap;text-align:right;transform:scaleY(1.07);transform-origin:0 17px;">128</div>
<div style="position:absolute;right:612px;top:748px;height:21px;line-height:21px;font-size:19px;color:#000;white-space:nowrap;text-align:right;transform:scaleY(1.07);transform-origin:0 17px;">4,096</div>
<div style="position:absolute;right:411px;top:748px;height:21px;line-height:21px;font-size:19px;color:#000;white-space:nowrap;text-align:right;transform:scaleY(1.07);transform-origin:0 17px;letter-spacing:0.25px">&gt;<span style="margin-left:3px">=</span>&nbsp;38,584</div>
<svg style="position:absolute;left:46px;top:779px" width="14" height="14" viewBox="0 0 14 14"><circle cx="6.5" cy="6.5" r="6" fill="#3ca23c" stroke="#237a3a" stroke-width="1"/><path d="M9 4.3 A2.9 2.9 0 1 0 9 8.7" fill="none" stroke="#fff" stroke-width="1.9"/></svg>
<div style="position:absolute;left:63px;top:776px;height:21px;line-height:21px;font-size:19px;color:#000;white-space:nowrap;transform:scaleY(1.07);transform-origin:0 17px;">java.util.WeakHashMap$Entry[]</div>
<div style="position:absolute;right:847px;top:776px;height:21px;line-height:21px;font-size:19px;color:#000;white-space:nowrap;text-align:right;transform:scaleY(1.07);transform-origin:0 17px;">38</div>
<div style="position:absolute;right:612px;top:776px;height:21px;line-height:21px;font-size:19px;color:#000;white-space:nowrap;text-align:right;transform:scaleY(1.07);transform-origin:0 17px;">3,680</div>
<div style="position:absolute;right:411px;top:776px;height:21px;line-height:21px;font-size:19px;color:#000;white-space:nowrap;text-align:right;transform:scaleY(1.07);transform-origin:0 17px;letter-spacing:0.25px">&gt;<span style="margin-left:3px">=</span>&nbsp;11,608</div>
<svg style="position:absolute;left:46px;top:807px" width="14" height="14" viewBox="0 0 14 14"><circle cx="6.5" cy="6.5" r="6" fill="#3ca23c" stroke="#237a3a" stroke-width="1"/><path d="M9 4.3 A2.9 2.9 0 1 0 9 8.7" fill="none" stroke="#fff" stroke-width="1.9"/></svg>
<div style="position:absolute;left:63px;top:804px;height:21px;line-height:21px;font-size:19px;color:#000;white-space:nowrap;transform:scaleY(1.07);transform-origin:0 17px;">char[][]</div>
<div style="position:absolute;right:847px;top:804px;height:21px;line-height:21px;font-size:19px;color:#000;white-space:nowrap;text-align:right;transform:scaleY(1.07);transform-origin:0 17px;">104</div>
<div style="position:absolute;right:612px;top:804px;height:21px;line-height:21px;font-size:19px;color:#000;white-space:nowrap;text-align:right;transform:scaleY(1.07);transform-origin:0 17px;">3,512</div>
<div style="position:absolute;right:411px;top:804px;height:21px;line-height:21px;font-size:19px;color:#000;white-space:nowrap;text-align:right;transform:scaleY(1.07);transform-origin:0 17px;letter-spacing:0.25px">&gt;<span style="margin-left:3px">=</span>&nbsp;58,856</div>
<svg style="position:absolute;left:46px;top:835px" width="14" height="14" viewBox="0 0 14 14"><circle cx="6.5" cy="6.5" r="6" fill="#3ca23c" stroke="#237a3a" stroke-width="1"/><path d="M9 4.3 A2.9 2.9 0 1 0 9 8.7" fill="none" stroke="#fff" stroke-width="1.9"/></svg>
<div style="position:absolute;left:63px;top:832px;height:21px;line-height:21px;font-size:19px;color:#000;white-space:nowrap;transform:scaleY(1.07);transform-origin:0 17px;">java.lang.ref.SoftReference</div>
<div style="position:absolute;right:847px;top:832px;height:21px;line-height:21px;font-size:19px;color:#000;white-space:nowrap;text-align:right;transform:scaleY(1.07);transform-origin:0 17px;">85</div>
<div style="position:absolute;right:612px;top:832px;height:21px;line-height:21px;font-size:19px;color:#000;white-space:nowrap;text-align:right;transform:scaleY(1.07);transform-origin:0 17px;">3,400</div>
<div style="position:absolute;right:411px;top:832px;height:21px;line-height:21px;font-size:19px;color:#000;white-space:nowrap;text-align:right;transform:scaleY(1.07);transform-origin:0 17px;letter-spacing:0.25px">&gt;<span style="margin-left:3px">=</span>&nbsp;5,320</div>
<svg style="position:absolute;left:46px;top:863px" width="14" height="14" viewBox="0 0 14 14"><circle cx="6.5" cy="6.5" r="6" fill="#3ca23c" stroke="#237a3a" stroke-width="1"/><path d="M9 4.3 A2.9 2.9 0 1 0 9 8.7" fill="none" stroke="#fff" stroke-width="1.9"/></svg>
<div style="position:absolute;left:63px;top:860px;height:21px;line-height:21px;font-size:19px;color:#000;white-space:nowrap;transform:scaleY(1.07);transform-origin:0 17px;">java.lang.Class[]</div>
<div style="position:absolute;right:847px;top:860px;height:21px;line-height:21px;font-size:19px;color:#000;white-space:nowrap;text-align:right;transform:scaleY(1.07);transform-origin:0 17px;">167</div>
<div style="position:absolute;right:612px;top:860px;height:21px;line-height:21px;font-size:19px;color:#000;white-space:nowrap;text-align:right;transform:scaleY(1.07);transform-origin:0 17px;">3,016</div>
<div style="position:absolute;right:411px;top:860px;height:21px;line-height:21px;font-size:19px;color:#000;white-space:nowrap;text-align:right;transform:scaleY(1.07);transform-origin:0 17px;letter-spacing:0.25px">&gt;<span style="margin-left:3px">=</span>&nbsp;3,016</div>
<svg style="position:absolute;left:46px;top:891px" width="14" height="14" viewBox="0 0 14 14"><circle cx="6.5" cy="6.5" r="6" fill="#3ca23c" stroke="#237a3a" stroke-width="1"/><path d="M9 4.3 A2.9 2.9 0 1 0 9 8.7" fill="none" stroke="#fff" stroke-width="1.9"/></svg>
<div style="position:absolute;left:63px;top:888px;height:21px;line-height:21px;font-size:19px;color:#000;white-space:nowrap;transform:scaleY(1.07);transform-origin:0 17px;">javax.management.openmbean....</div>
<div style="position:absolute;right:847px;top:888px;height:21px;line-height:21px;font-size:19px;color:#000;white-space:nowrap;text-align:right;transform:scaleY(1.07);transform-origin:0 17px;">45</div>
<div style="position:absolute;right:612px;top:888px;height:21px;line-height:21px;font-size:19px;color:#000;white-space:nowrap;text-align:right;transform:scaleY(1.07);transform-origin:0 17px;">2,880</div>
<div style="position:absolute;right:411px;top:888px;height:21px;line-height:21px;font-size:19px;color:#000;white-space:nowrap;text-align:right;transform:scaleY(1.07);transform-origin:0 17px;letter-spacing:0.25px">&gt;<span style="margin-left:3px">=</span>&nbsp;6,712</div>
<svg style="position:absolute;left:46px;top:919px" width="14" height="14" viewBox="0 0 14 14"><circle cx="6.5" cy="6.5" r="6" fill="#3ca23c" stroke="#237a3a" stroke-width="1"/><path d="M9 4.3 A2.9 2.9 0 1 0 9 8.7" fill="none" stroke="#fff" stroke-width="1.9"/></svg>
<div style="position:absolute;left:63px;top:916px;height:21px;line-height:21px;font-size:19px;color:#000;white-space:nowrap;transform:scaleY(1.07);transform-origin:0 17px;">java.lang.Object</div>
<div style="position:absolute;right:847px;top:916px;height:21px;line-height:21px;font-size:19px;color:#000;white-space:nowrap;text-align:right;transform:scaleY(1.07);transform-origin:0 17px;">178</div>
<div style="position:absolute;right:612px;top:916px;height:21px;line-height:21px;font-size:19px;color:#000;white-space:nowrap;text-align:right;transform:scaleY(1.07);transform-origin:0 17px;">2,848</div>
<div style="position:absolute;right:411px;top:916px;height:21px;line-height:21px;font-size:19px;color:#000;white-space:nowrap;text-align:right;transform:scaleY(1.07);transform-origin:0 17px;letter-spacing:0.25px">&gt;<span style="margin-left:3px">=</span>&nbsp;2,848</div>
<div style="position:absolute;left:782px;top:337px;width:3px;height:386px;background:linear-gradient(to right,rgba(0,0,0,0.46),rgba(0,0,0,0.38) 55%,rgba(0,0,0,0.06))"></div>
<div style="position:absolute;left:252px;top:720px;width:530px;height:3px;background:linear-gradient(to bottom,rgba(0,0,0,0.46),rgba(0,0,0,0.38) 55%,rgba(0,0,0,0.06))"></div>
<div style="position:absolute;left:247px;top:332px;width:535px;height:388px;background:#f0f0f0;border:1px solid #cccccc;box-sizing:border-box"></div>
<div style="position:absolute;left:287px;top:333px;width:494px;height:386px;background:#f2f2f2"></div>
<div style="position:absolute;left:250px;top:686px;width:529px;height:31px;background:#91c9f7"></div>
<div style="position:absolute;left:287px;top:623px;width:491px;height:1px;background:#d7d7d7"></div>
<div style="position:absolute;left:287px;top:682px;width:491px;height:1px;background:#d7d7d7"></div>
<div style="position:absolute;left:290px;top:340px;height:20px;line-height:20px;font-size:18px;color:#000;white-space:nowrap;letter-spacing:0.66px">List objects</div>
<svg style="position:absolute;left:762px;top:345px" width="8" height="11" viewBox="0 0 8 11"><path d="M1 0.8 L6.5 5.5 L1 10.2" fill="none" stroke="#333" stroke-width="1.4"/></svg>
<div style="position:absolute;left:290px;top:372px;height:20px;line-height:20px;font-size:18px;color:#000;white-space:nowrap;letter-spacing:0.66px">Show objects by class</div>
<svg style="position:absolute;left:762px;top:377px" width="8" height="11" viewBox="0 0 8 11"><path d="M1 0.8 L6.5 5.5 L1 10.2" fill="none" stroke="#333" stroke-width="1.4"/></svg>
<div style="position:absolute;left:290px;top:400px;height:20px;line-height:20px;font-size:18px;color:#000;white-space:nowrap;letter-spacing:0.66px">Merge Shortest Paths to GC Roots</div>
<svg style="position:absolute;left:762px;top:405px" width="8" height="11" viewBox="0 0 8 11"><path d="M1 0.8 L6.5 5.5 L1 10.2" fill="none" stroke="#333" stroke-width="1.4"/></svg>
<svg style="position:absolute;left:262px;top:401px" width="16" height="17" viewBox="0 0 16 17"><path d="M3.4 6.5 V15.5 H5.5 M3.4 10.5 H5.5 M8 10.5 H11.5 M8 15.5 H11.5" stroke="#4a6aa8" stroke-width="1" fill="none"/><circle cx="3" cy="4" r="2.5" fill="#fbc88a" stroke="#c87818" stroke-width="1.2"/><g fill="#8a90d8" stroke="#4a6aa8" stroke-width="1"><rect x="5.5" y="9" width="2.6" height="2.6"/><rect x="11.5" y="9" width="2.6" height="2.6"/><rect x="5.5" y="14" width="2.6" height="2.6"/><rect x="11.5" y="14" width="2.6" height="2.6"/></g></svg>
<div style="position:absolute;left:290px;top:428px;height:20px;line-height:20px;font-size:18px;color:#000;white-space:nowrap;letter-spacing:0.66px">Java Basics</div>
<svg style="position:absolute;left:762px;top:433px" width="8" height="11" viewBox="0 0 8 11"><path d="M1 0.8 L6.5 5.5 L1 10.2" fill="none" stroke="#333" stroke-width="1.4"/></svg>
<div style="position:absolute;left:290px;top:460px;height:20px;line-height:20px;font-size:18px;color:#000;white-space:nowrap;letter-spacing:0.66px">Leak Identification</div>
<svg style="position:absolute;left:762px;top:465px" width="8" height="11" viewBox="0 0 8 11"><path d="M1 0.8 L6.5 5.5 L1 10.2" fill="none" stroke="#333" stroke-width="1.4"/></svg>
<div style="position:absolute;left:290px;top:489px;height:20px;line-height:20px;font-size:18px;color:#000;white-space:nowrap;letter-spacing:0.66px">Export Snapshot</div>
<svg style="position:absolute;left:262px;top:489px" width="17" height="17" viewBox="0 0 17 17"><g stroke="#1a4ad8" stroke-width="1.2" fill="#9ad0f0"><ellipse cx="10.3" cy="13.4" rx="5.6" ry="2.5"/><ellipse cx="10.3" cy="10.4" rx="5.6" ry="2.5"/><ellipse cx="10.3" cy="7.4" rx="5.6" ry="2.5"/><ellipse cx="10.3" cy="3.8" rx="5.6" ry="2.9"/></g><path d="M0.8 7.5 Q1 3 5 3 V0.8 L9.2 4.2 L5 7.6 V5.4 Q2.6 5.4 0.8 7.5 Z" fill="#f0b050" stroke="#2a8a3a" stroke-width="1"/></svg>
<div style="position:absolute;left:290px;top:515px;height:20px;line-height:20px;font-size:18px;color:#000;white-space:nowrap;letter-spacing:0.66px">Immediate Dominators</div>
<svg style="position:absolute;left:262px;top:515px" width="17" height="18" viewBox="0 0 17 18"><g fill="#d0ecb8" stroke="#2a8a3a" stroke-width="1.1"><rect x="0.6" y="0.6" width="6" height="5" rx="1.5"/><rect x="2.6" y="2.6" width="6" height="5" rx="1.5"/><rect x="4.6" y="4.6" width="6" height="5" rx="1.5"/></g><path d="M7.5 10 V16.5 H11 M7.5 12.5 H11" stroke="#6a6a6a" stroke-width="1" fill="none"/><g fill="#9cd0f8" stroke="#2a64c8" stroke-width="1"><rect x="11" y="11" width="5.5" height="2.8" rx="0.6"/><rect x="11" y="15" width="5.5" height="2.8" rx="0.6"/></g></svg>
<div style="position:absolute;left:290px;top:541px;height:20px;line-height:20px;font-size:18px;color:#000;white-space:nowrap;letter-spacing:0.66px">Show Retained Set</div>
<svg style="position:absolute;left:263px;top:544px" width="16" height="12" viewBox="0 0 16 12"><g fill="#a8c4e4" stroke="#5a7ab0" stroke-width="0.9"><rect x="0.5" y="0.5" width="11" height="2.6"/><rect x="2.5" y="4.5" width="11" height="2.6"/><rect x="4.5" y="8.5" width="11" height="2.6"/></g></svg>
<div style="position:absolute;left:290px;top:569px;height:20px;line-height:20px;font-size:18px;color:#000;white-space:nowrap;letter-spacing:0.66px">Copy</div>
<svg style="position:absolute;left:762px;top:574px" width="8" height="11" viewBox="0 0 8 11"><path d="M1 0.8 L6.5 5.5 L1 10.2" fill="none" stroke="#333" stroke-width="1.4"/></svg>
<div style="position:absolute;left:290px;top:598px;height:20px;line-height:20px;font-size:18px;color:#000;white-space:nowrap;letter-spacing:0.66px">Search Queries...</div>
<svg style="position:absolute;left:262px;top:599px" width="17" height="16" viewBox="0 0 17 16"><g stroke="#2a70e0" stroke-width="1.2" fill="#a8d8f5"><ellipse cx="6.5" cy="11" rx="5.5" ry="2.8"/><ellipse cx="6.5" cy="7.5" rx="5.5" ry="2.8"/><ellipse cx="6.5" cy="4" rx="5.5" ry="3"/></g><rect x="5.5" y="3.2" width="2" height="1.2" fill="#0a3a80"/><circle cx="12" cy="11.5" r="3.7" fill="none" stroke="#c86a30" stroke-width="1.5" stroke-dasharray="1.2 1.1"/><circle cx="12" cy="11.5" r="3.1" fill="#f8d880" stroke="#c86a30" stroke-width="0.9"/><circle cx="12" cy="11.5" r="1.2" fill="#fff" stroke="#6a4a30" stroke-width="0.8"/></svg>
<div style="position:absolute;left:290px;top:630px;height:20px;line-height:20px;font-size:18px;color:#000;white-space:nowrap;letter-spacing:0.66px">Calculate Minimum Retained Size (quick approx.)</div>
<svg style="position:absolute;left:264px;top:634px" width="12" height="12" viewBox="0 0 12 12"><rect x="0.6" y="0.6" width="10.8" height="10.8" fill="#e8f0f0" stroke="#3a3a30" stroke-width="1.2"/><rect x="2" y="2" width="8" height="2" fill="#2a6aa0"/><g fill="#3a8ac0"><rect x="2.5" y="5.5" width="1.6" height="1.4"/><rect x="5.2" y="5.5" width="1.6" height="1.4"/><rect x="7.9" y="5.5" width="1.6" height="1.4"/><rect x="2.5" y="8.3" width="1.6" height="1.4"/><rect x="5.2" y="8.3" width="1.6" height="1.4"/><rect x="7.9" y="8.3" width="1.6" height="1.4"/></g></svg>
<div style="position:absolute;left:290px;top:657px;height:20px;line-height:20px;font-size:18px;color:#000;white-space:nowrap;letter-spacing:0.66px">Calculate Precise Retained Size</div>
<svg style="position:absolute;left:264px;top:660px" width="12" height="12" viewBox="0 0 12 12"><rect x="0.6" y="0.6" width="10.8" height="10.8" fill="#e8f0f0" stroke="#3a3a30" stroke-width="1.2"/><rect x="2" y="2" width="8" height="2" fill="#2a6aa0"/><g fill="#3a8ac0"><rect x="2.5" y="5.5" width="1.6" height="1.4"/><rect x="5.2" y="5.5" width="1.6" height="1.4"/><rect x="7.9" y="5.5" width="1.6" height="1.4"/><rect x="2.5" y="8.3" width="1.6" height="1.4"/><rect x="5.2" y="8.3" width="1.6" height="1.4"/><rect x="7.9" y="8.3" width="1.6" height="1.4"/></g></svg>
<div style="position:absolute;left:290px;top:692px;height:20px;line-height:20px;font-size:18px;color:#000;white-space:nowrap;letter-spacing:0.66px">Columns...</div>
<svg style="position:absolute;left:762px;top:697px" width="8" height="11" viewBox="0 0 8 11"><path d="M1 0.8 L6.5 5.5 L1 10.2" fill="none" stroke="#333" stroke-width="1.4"/></svg>
<div style="position:absolute;left:971px;top:688px;width:3px;height:65px;background:linear-gradient(to right,rgba(0,0,0,0.46),rgba(0,0,0,0.38) 55%,rgba(0,0,0,0.06))"></div>
<div style="position:absolute;left:781px;top:750px;width:190px;height:3px;background:linear-gradient(to bottom,rgba(0,0,0,0.46),rgba(0,0,0,0.38) 55%,rgba(0,0,0,0.06))"></div>
<div style="position:absolute;left:776px;top:683px;width:195px;height:67px;background:#f0f0f0;border:1px solid #cccccc;box-sizing:border-box"></div>
<div style="position:absolute;left:779px;top:717px;width:189px;height:31px;background:#91c9f7"></div>
<div style="position:absolute;left:821px;top:692px;height:20px;line-height:20px;font-size:18px;color:#000;white-space:nowrap;letter-spacing:0.5px">Edit Filter</div>
<svg style="position:absolute;left:951px;top:697px" width="8" height="11" viewBox="0 0 8 11"><path d="M1 0.8 L6.5 5.5 L1 10.2" fill="none" stroke="#333" stroke-width="1.4"/></svg>
<div style="position:absolute;left:821px;top:723px;height:20px;line-height:20px;font-size:18px;color:#000;white-space:nowrap;letter-spacing:0.5px">Sort By</div>
<svg style="position:absolute;left:951px;top:728px" width="8" height="11" viewBox="0 0 8 11"><path d="M1 0.8 L6.5 5.5 L1 10.2" fill="none" stroke="#333" stroke-width="1.4"/></svg>
<div style="position:absolute;left:1205px;top:719px;width:3px;height:128px;background:linear-gradient(to right,rgba(0,0,0,0.46),rgba(0,0,0,0.38) 55%,rgba(0,0,0,0.06))"></div>
<div style="position:absolute;left:970px;top:844px;width:235px;height:3px;background:linear-gradient(to bottom,rgba(0,0,0,0.46),rgba(0,0,0,0.38) 55%,rgba(0,0,0,0.06))"></div>
<div style="position:absolute;left:965px;top:714px;width:240px;height:130px;background:#f0f0f0;border:1px solid #cccccc;box-sizing:border-box"></div>
<div style="position:absolute;left:968px;top:717px;width:234px;height:31px;background:#91c9f7"></div>
<div style="position:absolute;left:1009px;top:722px;height:20px;line-height:20px;font-size:18px;color:#000;white-space:nowrap;letter-spacing:0.2px">Class Name</div>
<div style="position:absolute;left:1009px;top:754px;height:20px;line-height:20px;font-size:18px;color:#000;white-space:nowrap;letter-spacing:0.2px">Objects</div>
<div style="position:absolute;left:1009px;top:784px;height:20px;line-height:20px;font-size:18px;color:#000;white-space:nowrap;letter-spacing:0.2px">Shallow Heap</div>
<div style="position:absolute;left:1009px;top:816px;height:20px;line-height:20px;font-size:18px;color:#000;white-space:nowrap;letter-spacing:0.2px">Retained Heap</div>
</body></html>
